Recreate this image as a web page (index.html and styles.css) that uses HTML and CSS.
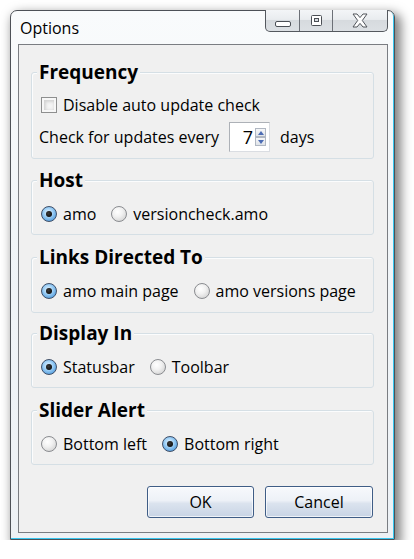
FILE: index.html
```html
<!DOCTYPE html>
<html lang="en">
<head>
<meta charset="utf-8">
<title>Options</title>
<link rel="stylesheet" href="styles.css">
</head>
<body>
<div class="window">
  <div class="titlebar">
    <span class="title">Options</span>
    <div class="caption-buttons">
      <div class="cb cb-min">
        <svg width="16" height="6" viewBox="0 0 16 6"><rect x="0.5" y="0.5" width="15" height="5" rx="1.5" fill="#fff" stroke="#4b4f55"/></svg>
      </div>
      <div class="cb cb-max">
        <svg width="11" height="11" viewBox="0 0 11 11"><rect x="0.5" y="0.5" width="10" height="10" rx="1" fill="#fff" stroke="#4b4f55"/><rect x="3.5" y="3.5" width="4" height="3" fill="#d8dce1" stroke="#4b4f55"/></svg>
      </div>
      <div class="cb cb-close">
        <svg width="16" height="15" viewBox="0 0 16 15"><polygon points="1,1 5,1 8,4.6 11,1 15,1 10.3,7.5 15,14 11,14 8,10.4 5,14 1,14 5.7,7.5" fill="#fff" stroke="#50545a" stroke-width="1" stroke-linejoin="round"/></svg>
      </div>
    </div>
  </div>
  <div class="client">
    <fieldset class="group group-freq">
      <legend>Frequency</legend>
      <div class="row">
        <span class="opt"><span class="checkbox"></span><span class="label">Disable auto update check</span></span>
      </div>
      <div class="row row-spin">
        <span class="label">Check for updates every</span>
        <div class="spin">
          <span class="spin-val">7</span>
          <div class="spin-btns">
            <span class="spin-btn spin-up"></span>
            <span class="spin-btn spin-down"></span>
          </div>
        </div>
        <span class="label">days</span>
      </div>
    </fieldset>

    <fieldset class="group group-host">
      <legend>Host</legend>
      <div class="row">
        <span class="opt"><span class="radio checked"></span><span class="label">amo</span></span>
        <span class="opt"><span class="radio"></span><span class="label">versioncheck.amo</span></span>
      </div>
    </fieldset>

    <fieldset class="group group-links">
      <legend>Links Directed To</legend>
      <div class="row">
        <span class="opt"><span class="radio checked"></span><span class="label">amo main page</span></span>
        <span class="opt"><span class="radio"></span><span class="label">amo versions page</span></span>
      </div>
    </fieldset>

    <fieldset class="group group-display">
      <legend>Display In</legend>
      <div class="row">
        <span class="opt"><span class="radio checked"></span><span class="label">Statusbar</span></span>
        <span class="opt"><span class="radio"></span><span class="label">Toolbar</span></span>
      </div>
    </fieldset>

    <fieldset class="group group-slider">
      <legend>Slider Alert</legend>
      <div class="row">
        <span class="opt"><span class="radio"></span><span class="label">Bottom left</span></span>
        <span class="opt"><span class="radio checked"></span><span class="label">Bottom right</span></span>
      </div>
    </fieldset>

    <div class="buttons">
      <button class="btn btn-ok">OK</button>
      <button class="btn btn-cancel">Cancel</button>
    </div>
  </div>
</div>
</body>
</html>
```

FILE: styles.css
```css
html, body {
  margin: 0;
  padding: 0;
  background: #ffffff;
}

body {
  font-family: "Open Sans", "Noto Sans", "Liberation Sans", sans-serif;
  font-size: 16px;
  color: #000;
}

.window {
  box-sizing: border-box;
  width: 385px;
  height: 530px;
  margin: 10px 0 0 10px;
  padding: 0 6px 7px 7px;
  border: 1px solid #4d5157;
  border-radius: 7px 7px 0 0;
  background: linear-gradient(180deg, #f9fbfc 0%, #f1f5f8 40%, #edf1f5 100%);
  box-shadow: inset -1px -1px 0 #37c6ef, 4px 5px 11px 2px rgba(0, 0, 0, 0.5);
}

.titlebar {
  height: 33px;
  display: flex;
  justify-content: space-between;
  align-items: flex-start;
}

.title {
  padding: 6px 0 0 2px;
  font-size: 16px;
  line-height: 22px;
}

.caption-buttons {
  display: flex;
  margin-top: -1px;
  height: 21px;
  border: 1px solid #54585e;
  border-top: none;
  border-radius: 0 0 5px 5px;
  overflow: hidden;
  background: linear-gradient(180deg, #f3f5f7 0%, #e9ecef 45%, #d6dade 50%, #dce0e4 100%);
}

.cb {
  display: flex;
  align-items: center;
  justify-content: center;
  height: 21px;
}

.cb-min {
  width: 33px;
  border-right: 1px solid #6c7077;
  align-items: flex-end;
}
.cb-min svg { margin-bottom: 4px; margin-left: 1px; }

.cb-max {
  width: 32px;
  border-right: 1px solid #6c7077;
}

.cb-close {
  width: 54px;
}

.client {
  box-sizing: border-box;
  height: 489px;
  border: 1px solid #7a7d82;
  background: #f0f0f0;
  padding: 15px 13px 13px 12px;
  display: flex;
  flex-direction: column;
}

.group {
  margin: 0;
  padding: 10px 0 8px 9px;
  border: 1px solid #d5dfe5;
  border-radius: 3px;
  box-shadow: inset 1px 1px 0 #fbfcfd;
}

.group legend {
  margin-left: -4px;
  padding: 0 2px;
  font-size: 19px;
  font-weight: bold;
  line-height: 24px;
  background: #f0f0f0;
}

.group-freq {
  padding: 9px 0 6px 9px;
  margin-bottom: 9px;
}
.group-host { margin-bottom: 10px; }
.group-links { margin-bottom: 8px; padding-bottom: 9px; }
.group-display { margin-bottom: 10px; }

.row {
  display: flex;
  align-items: center;
  height: 24px;
  gap: 15px;
}

.row-spin {
  height: 30px;
  margin-top: 5px;
  margin-left: -2px;
  gap: 10px;
}

.opt {
  display: inline-flex;
  align-items: center;
}

.label {
  white-space: nowrap;
  line-height: 20px;
}

.checkbox {
  box-sizing: border-box;
  width: 16px;
  height: 16px;
  margin-right: 6px;
  border: 1px solid #8e8f8f;
  background: #f4f4f4;
  box-shadow: inset 0 0 0 2px #f7f7f7, inset 1px 1px 3px 3px #d4d4d4;
}

.radio {
  box-sizing: border-box;
  width: 16px;
  height: 16px;
  margin-right: 6px;
  border: 1px solid #8a8c90;
  border-radius: 50%;
  background: radial-gradient(circle at 40% 35%, #ffffff 0%, #f1f1f1 40%, #c9c9c9 100%);
  position: relative;
}

.radio.checked {
  border-color: #3f4f68;
  background: radial-gradient(circle at 45% 40%, #e6f4ff 0%, #9fd0f6 40%, #3f8fd6 90%);
}

.radio.checked::after {
  content: "";
  position: absolute;
  left: 4px;
  top: 4px;
  width: 6px;
  height: 6px;
  border-radius: 50%;
  background: radial-gradient(circle at 40% 40%, #3a3a3a, #000);
}

.spin {
  box-sizing: border-box;
  width: 41px;
  height: 30px;
  border: 1px solid #adb1b7;
  border-right-color: #dadde2;
  border-bottom-color: #dadde2;
  background: #fff;
  display: flex;
  align-items: center;
  justify-content: flex-end;
  padding-right: 3px;
  gap: 2px;
}

.spin-val {
  font-size: 18px;
  line-height: 20px;
}

.spin-btns {
  display: flex;
  flex-direction: column;
}

.spin-btn {
  box-sizing: border-box;
  width: 11px;
  height: 9px;
  border: 1px solid #b0b7c2;
  background: linear-gradient(180deg, #f6f7f9, #dfe3e8);
  display: flex;
  align-items: center;
  justify-content: center;
}

.spin-up::after {
  content: "";
  border-left: 3px solid transparent;
  border-right: 3px solid transparent;
  border-bottom: 4px solid #4c6cb4;
}

.spin-down::after {
  content: "";
  border-left: 3px solid transparent;
  border-right: 3px solid transparent;
  border-top: 4px solid #4c6cb4;
}

.buttons {
  display: flex;
  justify-content: flex-end;
  gap: 11px;
  margin-top: 21px;
  margin-right: 1px;
}

.btn {
  box-sizing: border-box;
  height: 32px;
  border: 1px solid #3f5d86;
  border-radius: 3px;
  background: linear-gradient(180deg, #f7f9fc 0%, #edf1f7 45%, #dbe3ee 55%, #c8d4e5 100%);
  box-shadow: inset 0 0 0 1px rgba(255, 255, 255, 0.7);
  font-family: "Open Sans", "Noto Sans", "Liberation Sans", sans-serif;
  font-size: 16px;
  color: #000;
  padding: 0;
}

.btn-ok { width: 107px; }
.btn-cancel { width: 108px; }
```
